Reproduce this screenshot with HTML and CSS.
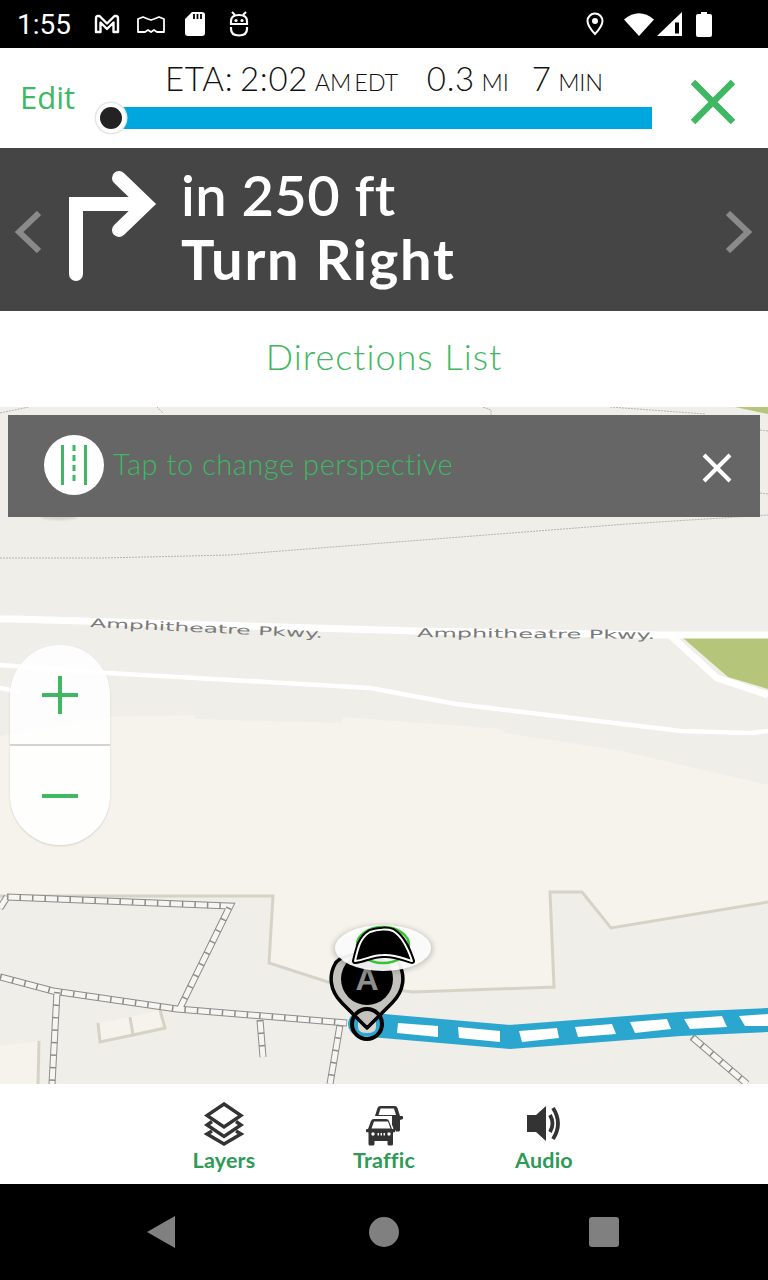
FILE: index.html
```html
<!DOCTYPE html>
<html lang="en">
<head>
<meta charset="utf-8">
<title>Navigation</title>
<link rel="stylesheet" href="styles.css">
</head>
<body>
<div class="screen">
  <div class="status">
    <span class="clock">1:55</span>
    <div class="status-left">
      <svg class="st st-m" viewBox="0 0 28 20"><path d="M3 18V4.500Q3 2 5 2h1.500L14 9.500 21.500 2H23q2 0 2 2.500V18h-4.500V8.500L14 15 7.500 8.500V18z" fill="none" stroke="#fff" stroke-width="2.400" stroke-linejoin="round"/></svg>
      <svg class="st st-book" viewBox="0 0 28 20"><path d="M1 18V5l5-2 5 2 3 1 3-1 5-2 5 2v13h-7l-3-2-3 2-3-2-3 2z" fill="none" stroke="#fff" stroke-width="1.800" stroke-linejoin="round"/></svg>
      <svg class="st st-sd" viewBox="0 0 20 24"><path d="M7 0h10q3 0 3 3v18q0 3-3 3H3q-3 0-3-3V7z" fill="#fff"/><path d="M9 2v5M12.500 2v5M16 2v5" stroke="#000" stroke-width="1.800"/></svg>
      <svg class="st st-bot" viewBox="0 0 20 26"><path d="M3 1l3 3M17 1l-3 3" stroke="#fff" stroke-width="2"/><path d="M2 13V10q0-6 8-6t8 6v3zM2 16v2q0 6.500 8 6.500t8-6.500v-2" fill="none" stroke="#fff" stroke-width="2.200"/><circle cx="7" cy="9.500" r="1.600" fill="#fff"/><circle cx="13" cy="9.500" r="1.600" fill="#fff"/></svg>
    </div>
    <div class="status-right">
      <svg class="st st-pin" viewBox="0 0 18 24"><path d="M9 1.500C4.800 1.500 1.500 4.800 1.500 9c0 5 7.500 13 7.500 13s7.500-8 7.500-13C16.500 4.800 13.200 1.500 9 1.500z" fill="none" stroke="#fff" stroke-width="2"/><circle cx="9" cy="9" r="3" fill="#fff"/></svg>
      <svg class="st st-wifi" viewBox="0 0 30 24"><path d="M0 7.500Q15-5 30 7.500L15 24z" fill="#fff"/></svg>
      <svg class="st st-cell" viewBox="0 0 25 24"><path d="M0 24L25 0v24z" fill="#fff"/><path d="M18 10.500h4v11h-4z" fill="#000"/></svg>
      <svg class="st st-batt" viewBox="0 0 16 25"><path d="M5 0h6v2h3q2 0 2 2v19q0 2-2 2H2q-2 0-2-2V4q0-2 2-2h3z" fill="#fff"/></svg>
    </div>
  </div>

  <header class="top">
    <a class="edit">Edit</a>
    <div class="trip">
      <div class="eta">
        <span class="eta-item">ETA: 2:02 <small>AM EDT</small></span>
        <span class="eta-item">0.3 <small>MI</small></span>
        <span class="eta-item">7 <small>MIN</small></span>
      </div>
      <div class="progress"><span class="knob"></span></div>
    </div>
    <svg class="close-main" viewBox="0 0 44 44"><path d="M2 2l40 40M42 2L2 42" stroke="#3fb763" stroke-width="6.500" fill="none"/></svg>
  </header>

  <section class="maneuver">
    <svg class="chev" viewBox="0 0 26 42"><path d="M24 2L4 21l20 19" fill="none" stroke="#8a8a8a" stroke-width="6"/></svg>
    <svg class="turn" viewBox="0 0 92 112"><path d="M7 103V33h66" fill="none" stroke="#fff" stroke-width="14" stroke-linecap="round"/><path d="M50 7l27 26-27 26" fill="none" stroke="#fff" stroke-width="14" stroke-linecap="round" stroke-linejoin="miter"/></svg>
    <div class="maneuver-text">
      <div class="dist">in 250 ft</div>
      <div class="action">Turn Right</div>
    </div>
    <svg class="chev chev-r" viewBox="0 0 26 42"><path d="M2 2l20 19L2 40" fill="none" stroke="#8a8a8a" stroke-width="6"/></svg>
  </section>

  <div class="dirlist">Directions List</div>

  <main class="map">
    <svg class="map-canvas" viewBox="0 407 768 677">
      <rect class="m-ground" x="0" y="407" width="768" height="677"/>
      <path class="m-cream" d="M0 736L110 717 194 715 195 719 341 723 342 717 502 729 505 733 622 751 768 785V902L611 928 582 892 550 892 554 987 413 992 328 982 269 963 273 896H0z"/>
      <path class="m-edge" d="M0 896H273L269 963 328 982 413 992 554 987 550 892H582L611 928 768 902"/>
      <path class="m-green" d="M683 638H768V689L728 677z"/>
      <path class="m-green" d="M735 407H768V414z"/>
      <path class="m-road" d="M0 619H15L416 631 662 635H768"/>
      <path class="m-road" d="M671 636L717 678 768 695"/>
      <path class="m-road m-thin" d="M0 665L108 673 370 688 456 704 681 731 750 733 768 731"/>
      <path class="m-road m-thin" d="M0 688L20 692"/>
      <path class="m-dash" d="M0 413L29 407M157 407L163 413M483 407L491 410V415M610 407L705 414M0 558H103L230 555 627 524 768 515M760 430L768 431M760 493L768 494"/>
      <ellipse class="m-shadow" cx="59" cy="517" rx="18" ry="3"/>
      <text class="m-label" x="90" y="627" textLength="233" lengthAdjust="spacingAndGlyphs" transform="rotate(2.7 90 627)">Amphitheatre Pkwy.</text>
      <text class="m-label" x="417" y="637" textLength="238" lengthAdjust="spacingAndGlyphs" transform="rotate(0.5 417 637)">Amphitheatre Pkwy.</text>

      <g class="m-lots">
        <path d="M98 1023L130 1017 133 1035 100 1042z"/>
        <path d="M130 1017L160 1010 165 1028 133 1035z"/>
        <path d="M0 1046L39 1041 38 1084H0z"/>
      </g>
      <path class="m-edge" d="M98 1023L100 1042 133 1035 130 1017M133 1035L165 1028 160 1010M39 1041L38 1084"/>

      <g class="path-o">
        <path d="M7 897L230 906 180 1008"/>
        <path d="M0 977L53 991 177 1009 347 1023"/>
        <path d="M57 992L52 1084"/>
        <path d="M260 1020L263 1057"/>
        <path d="M340 1025L330 1084"/>
        <path d="M692 1037L747 1084"/>
        <path d="M7 897L0 908"/>
      </g>
      <g class="path-i">
        <path d="M7 897L230 906 180 1008"/>
        <path d="M0 977L53 991 177 1009 347 1023"/>
        <path d="M57 992L52 1084"/>
        <path d="M260 1020L263 1057"/>
        <path d="M340 1025L330 1084"/>
        <path d="M692 1037L747 1084"/>
        <path d="M7 897L0 908"/>
      </g>
      <g class="path-t">
        <path d="M7 897L230 906 180 1008"/>
        <path d="M0 977L53 991 177 1009 347 1023"/>
        <path d="M57 992L52 1084"/>
        <path d="M260 1020L263 1057"/>
        <path d="M340 1025L330 1084"/>
        <path d="M692 1037L747 1084"/>
      </g>

      <path class="m-route" d="M360 1024L510 1037 680 1024 768 1020"/>
      <g class="m-dashes">
        <path d="M398 1023L438 1026 438 1037 397 1033z"/>
        <path d="M458 1027L500 1031 500 1042 459 1038z"/>
        <path d="M519 1031L557 1028 559 1038 522 1042z"/>
        <path d="M575 1027L612 1024 616 1034 578 1037z"/>
        <path d="M630 1022L667 1019 671 1029 635 1033z"/>
        <path d="M684 1019L722 1016 727 1027 690 1029z"/>
        <path d="M739 1016L768 1014V1026L745 1026z"/>
      </g>

      <path class="pin-patch" d="M358 1018H376V1027Q376 1033 367 1033 358 1033 358 1027z"/>
      <path class="pin-body" d="M367 1028L342 1003C329 990 329 975 335 964 342 950 392 950 399 964 405 975 405 990 392 1003z"/>
      <circle class="pin-ring" cx="367" cy="1024" r="15"/>
      <circle class="pin-core" cx="367" cy="979" r="26"/>
      <text class="pin-letter" x="367" y="990" text-anchor="middle">A</text>
      <ellipse class="cap-shadow" cx="383" cy="949" rx="49" ry="23"/>
      <ellipse class="cap-disc" cx="383" cy="948" rx="48" ry="23"/>
      <ellipse class="cap-green" cx="383" cy="945" rx="26" ry="18"/>
      <path class="cap-outline" d="M355 961C358 948 360 938 370 932 378 929 388 929 393 931 403 937 408 949 412 961 402 958 394 954 383 955 372 955 365 960 355 961z"/>
      <path class="cap-dome" d="M355 961C358 948 360 938 370 932 378 929 388 929 393 931 403 937 408 949 412 961 402 958 394 954 383 955 372 955 365 960 355 961z"/>
    </svg>

    <div class="tip">
      <span class="tip-badge">
        <svg class="tip-road" viewBox="0 0 26 40"><path d="M1.500 0v40M24.500 0v40" stroke="#3fb763" stroke-width="3"/><path d="M13 0v40" stroke="#3fb763" stroke-width="3" stroke-dasharray="6 4"/></svg>
      </span>
      <span class="tip-text">Tap to change perspective</span>
      <svg class="tip-close" viewBox="0 0 30 30"><path d="M2 2l26 26M28 2L2 28" stroke="#fff" stroke-width="4" fill="none"/></svg>
    </div>

    <div class="zoom">
      <div class="zoom-btn"><svg class="zoom-ico" viewBox="0 0 36 38"><path d="M0 19h36M18 0v38" stroke="#3fb763" stroke-width="4" fill="none"/></svg></div>
      <div class="zoom-btn"><svg class="zoom-ico" viewBox="0 0 36 38"><path d="M0 19h36" stroke="#3fb763" stroke-width="4" fill="none"/></svg></div>
    </div>
  </main>

  <nav class="tools">
    <div class="tool">
      <svg class="tool-ico" viewBox="0 0 40 44"><g fill="none" stroke="#333" stroke-width="3.400" stroke-linejoin="miter"><path d="M20 2L37 13.500 20 25 3 13.500z"/><path d="M8 19.500L3 23l17 11.500L37 23l-5-3.500"/><path d="M8 29L3 32l17 10 17-10-5-3"/></g></svg>
      <span>Layers</span>
    </div>
    <div class="tool">
      <svg class="tool-ico" viewBox="0 0 40 44"><path d="M11 14l2.500-8q.5-2 3-2h14q2.500 0 3 2l2.500 8h2q1 0 1 1v2l-3 1v10q0 1.500-1.500 1.500h-3V28l-2 0q0-3-1.500-5V14H11z" fill="#333"/><path d="M14.500 13l2-6.500h13.500l2 6.500z" fill="#fff"/><path d="M4 27l3-8q.5-2 3-2h12q2.500 0 3 2l3 8h2q1 0 1 1v2l-2 .5V42q0 1.500-1.500 1.500H25q-1.500 0-1.500-1.500V39h-13v3q0 1.500-1.500 1.500H6q-1.500 0-1.500-1.500V30.500L2 30v-2q0-1 1-1z" fill="#333"/><path d="M7.500 26.500l2.500-7h14l2.500 7z" fill="#fff"/><circle cx="9" cy="32" r="1.700" fill="#fff"/><circle cx="25" cy="32" r="1.700" fill="#fff"/><path d="M13.500 31h1.500v2.500h-1.500zM16.500 31h1.500v2.500h-1.500zM19.500 31h1.500v2.500h-1.500z" fill="#fff"/></svg>
      <span>Traffic</span>
    </div>
    <div class="tool">
      <svg class="tool-ico" viewBox="0 0 40 44"><path d="M3 13h9L22 4v35L12 30H3z" fill="#333"/><path d="M26 13q5 8.500 0 17M29 6q10 15.500 0 31" fill="none" stroke="#333" stroke-width="3.800"/></svg>
      <span>Audio</span>
    </div>
  </nav>

  <div class="softkeys">
    <svg class="sk-back" viewBox="0 0 28 32"><path d="M0 16L28 0v32z" fill="#808080"/></svg>
    <span class="sk-home"></span>
    <span class="sk-recent"></span>
  </div>
</div>
</body>
</html>
```
FILE: styles.css
```css
* { box-sizing: border-box; }
html, body { margin: 0; padding: 0; }
body { width: 768px; height: 1280px; overflow: hidden; font-family: "Lato", "Liberation Sans", sans-serif; background: #fff; }
.screen { width: 768px; height: 1280px; display: flex; flex-direction: column; }

/* status bar */
.status { height: 48px; flex: none; background: #000; display: flex; align-items: center; padding-left: 17px; color: #fff; }
.clock { font-family: "Roboto", sans-serif; font-size: 28px; width: 76px; }
.status-left { display: flex; align-items: center; }
.status-right { display: flex; align-items: center; margin-left: auto; padding-right: 56px; }
.st { display: block; flex: none; }
.st-m { width: 28px; height: 20px; }
.st-book { width: 28px; height: 20px; margin-left: 16px; }
.st-sd { width: 20px; height: 24px; margin-left: 20px; }
.st-bot { width: 20px; height: 26px; margin-left: 24px; }
.st-pin { width: 18px; height: 24px; }
.st-wifi { width: 30px; height: 24px; margin-left: 20px; }
.st-cell { width: 25px; height: 24px; margin-left: 3px; }
.st-batt { width: 16px; height: 25px; margin-left: 14px; }

/* top trip strip */
.top { height: 100px; flex: none; background: #fff; display: flex; align-items: flex-start; }
.edit { color: #3fb763; font-family: "Open Sans", sans-serif; font-weight: 500; font-size: 31px; width: 111px; padding: 29px 0 0 20px; line-height: 40px; }
.trip { width: 541px; }
.eta { display: flex; height: 59px; align-items: flex-end; padding: 0 0 5px 54px; color: #111; font-weight: 300; font-size: 33px; line-height: 40px; letter-spacing: 0.7px; }
.eta small { font-size: 23.500px; letter-spacing: -0.2px; }
.eta-item { margin-right: 29px; white-space: nowrap; word-spacing: -3px; }
.eta-item:nth-child(2) { margin-right: 23px; }
.progress { position: relative; height: 22px; background: #00a6de; }
.knob { position: absolute; left: -15px; top: -4px; width: 30px; height: 30px; border-radius: 50%; background: #232323; border: 4px solid #fff; box-shadow: 0 0 0 1.500px #e6e6e6; }
.close-main { width: 44px; height: 44px; margin: 32px 0 0 39px; flex: none; }

/* maneuver banner */
.maneuver { height: 163px; flex: none; background: #454545; display: flex; align-items: center; padding-left: 15px; position: relative; color: #fff; }
.chev { width: 26px; height: 42px; flex: none; margin-top: 4px; }
.chev-r { margin-left: auto; margin-right: 16px; }
.turn { width: 92px; height: 112px; flex: none; margin-left: 28px; margin-top: -5px; }
.maneuver-text { margin-left: 20px; width: 400px; margin-top: -6px; }
.dist { font-size: 56px; font-weight: 600; line-height: 64px; letter-spacing: 0.4px; }
.action { font-size: 56px; font-weight: 700; line-height: 64px; letter-spacing: 1.700px; }

.dirlist { height: 96px; flex: none; background: #fff; color: #3fb763; font-size: 36px; font-weight: 300; line-height: 91px; text-align: center; letter-spacing: 1px; }

/* map */
.map { flex: 1; position: relative; overflow: hidden; background: #efeee9; }
.map-canvas { position: absolute; left: 0; top: 0; width: 768px; height: 677px; display: block; }
.m-ground { fill: #efeee9; }
.m-cream { fill: #f6f3ec; }
.m-edge { fill: none; stroke: #d6d3c6; stroke-width: 3; }
.m-green { fill: #b5c67b; }
.m-road { fill: none; stroke: #fff; stroke-width: 7; }
.m-thin { stroke-width: 4.500; }
.m-dash { fill: none; stroke: #b5b5b0; stroke-width: 1; stroke-dasharray: 2 1; }
.m-shadow { fill: #bdbbb6; opacity: 0.5; filter: blur(1px); }
.m-label { font-family: "DejaVu Sans", sans-serif; font-size: 12px; fill: #7a7a7a; }
.m-lots path { fill: #f6f3ec; }
.path-o path { fill: none; stroke: #8d8d8a; stroke-width: 7; }
.path-i path { fill: none; stroke: #f6f5f1; stroke-width: 5; }
.path-t path { fill: none; stroke: #8d8d8a; stroke-width: 6; stroke-dasharray: 1.500 11; }
.m-route { fill: none; stroke: #2ba6cf; stroke-width: 24; stroke-linecap: round; stroke-linejoin: miter; }
.m-dashes path { fill: #fff; }
.pin-patch { fill: #d9d7d1; }
.pin-ring { fill: none; stroke: #000; stroke-width: 4; }
.pin-body { fill: #c4c2bd; stroke: #000; stroke-width: 3.500; stroke-linejoin: round; }
.pin-core { fill: #000; }
.pin-letter { font-family: "Liberation Sans", sans-serif; font-weight: 700; font-size: 32px; fill: #8e8e8e; }
.cap-shadow { fill: #000; opacity: 0.25; filter: blur(3px); }
.cap-disc { fill: #fff; opacity: 0.93; }
.cap-green { fill: none; stroke: #35c52e; stroke-width: 2.500; }
.cap-outline { fill: #000; stroke: #000; stroke-width: 6; stroke-linejoin: round; }
.cap-dome { fill: #000; stroke: #fff; stroke-width: 2; stroke-linejoin: round; }

.tip { position: absolute; left: 8px; top: 8px; width: 752px; height: 102px; background: #666; display: flex; align-items: center; padding-left: 36px; }
.tip-badge { width: 60px; height: 60px; border-radius: 50%; background: #fff; display: flex; align-items: center; justify-content: center; flex: none; margin-top: -2px; }
.tip-road { width: 26px; height: 40px; display: block; }
.tip-text { color: #3fb763; font-size: 29px; font-weight: 300; margin-left: 9px; margin-top: -6px; letter-spacing: 0.550px; }
.tip-close { width: 30px; height: 30px; margin-left: auto; margin-right: 28px; margin-top: 4px; flex: none; }

.zoom { position: absolute; left: 10px; top: 238px; width: 100px; height: 200px; border-radius: 50px; background: rgba(255, 255, 255, 0.88); box-shadow: 0 1px 2px rgba(0, 0, 0, 0.15); overflow: hidden; display: flex; flex-direction: column; }
.zoom-btn { flex: 1; display: flex; align-items: center; justify-content: center; }
.zoom-btn:first-child { border-bottom: 2px solid #d6d4cd; }
.zoom-ico { width: 36px; height: 38px; display: block; }

/* bottom tools */
.tools { height: 100px; flex: none; background: #fff; display: flex; justify-content: center; }
.tool { width: 160px; display: flex; flex-direction: column; align-items: center; padding-top: 18px; color: #2e9a56; font-size: 21.500px; font-weight: 700; line-height: 28px; letter-spacing: 0.2px; }
.tool-ico { width: 40px; height: 44px; display: block; margin-bottom: 0; }

/* soft keys */
.softkeys { height: 96px; flex: none; background: #000; position: relative; display: flex; align-items: center; padding-left: 147px; }
.sk-back { width: 28px; height: 32px; display: block; flex: none; }
.sk-home { width: 30px; height: 30px; border-radius: 50%; background: #808080; margin-left: 194px; flex: none; }
.sk-recent { width: 30px; height: 30px; border-radius: 3px; background: #808080; margin-left: 190px; flex: none; }
```
